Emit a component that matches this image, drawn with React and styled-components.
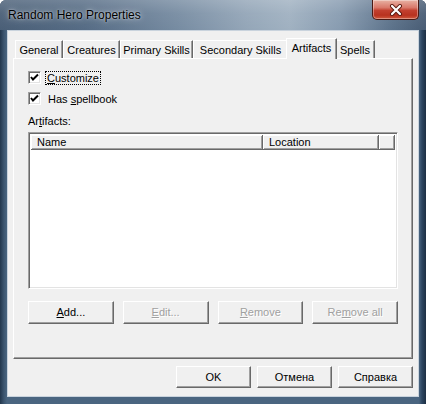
import React from "react";
import styled, { createGlobalStyle, css } from "styled-components";

const Global = createGlobalStyle`
  html, body { margin: 0; padding: 0; background: #ffffff; }
  body { font-family: "Liberation Sans", Arial, sans-serif; }
  * { box-sizing: border-box; }
`;

const Window = styled.div`
  width: 426px;
  height: 404px;
  display: flex;
  flex-direction: column;
  background: linear-gradient(90deg, #22364c 0px, #3d5670 4px, #4a6580 7px, #4a6580 calc(100% - 7px), #2c4560 calc(100% - 4px), #1d2f44 100%);
  border-radius: 6px 6px 0 0;
  overflow: hidden;
`;

const TitleBar = styled.div`
  height: 30px;
  flex: none;
  display: flex;
  align-items: flex-start;
  justify-content: space-between;
  padding-left: 8px;
  padding-right: 7px;
  background:
    linear-gradient(180deg, rgba(255,255,255,0.18) 0%, rgba(255,255,255,0.05) 45%, rgba(0,0,0,0) 100%),
    linear-gradient(90deg, #4a5f77 0%, #566c85 20%, #778ca2 42%, #94a6b8 58%, #a0b1c1 68%, #879bb0 80%, #5c728a 92%, #485c74 100%);
`;

const Title = styled.div`
  font-family: "Liberation Sans", Arial, sans-serif;
  font-size: 12px;
  color: #000;
  line-height: 16px;
  margin-top: 7px;
  text-shadow: 0 0 6px rgba(255,255,255,0.7), 0 0 2px rgba(255,255,255,0.6);
`;

const CloseButton = styled.div`
  width: 47px;
  height: 20px;
  border: 1px solid #4a1a14;
  border-top: none;
  border-radius: 0 0 5px 5px;
  background: linear-gradient(180deg, #e8b2a4 0%, #d9786a 40%, #c2402f 55%, #b8321f 80%, #cf5a3e 100%);
  box-shadow: inset 0 0 0 1px rgba(255,255,255,0.35);
  display: flex;
  align-items: center;
  justify-content: center;
`;

const Frame = styled.div`
  flex: 1;
  display: flex;
  flex-direction: column;
  padding: 0 7px 7px 7px;
`;

const Client = styled.div`
  flex: 1;
  background: #f0f0f0;
  border: 1px solid #c9d3dd;
  display: flex;
  flex-direction: column;
  padding: 7px 5px 0 5px;
  font-family: "Liberation Sans", Arial, sans-serif;
  font-size: 11px;
  color: #000;
`;

const TabRow = styled.div`
  height: 20px;
  flex: none;
  display: flex;
  align-items: flex-end;
  padding-left: 2px;
  position: relative;
  z-index: 1;
`;

const Tab = styled.div`
  width: ${(p) => p.$w}px;
  height: 18px;
  display: flex;
  align-items: center;
  justify-content: center;
  background: #f0f0f0;
  border-top: 1px solid #ffffff;
  border-left: 1px solid #ffffff;
  border-right: 1px solid #696969;
  box-shadow: inset -1px 0 #a0a0a0;
  line-height: 13px;
  padding-top: 1px;
  ${(p) =>
    p.$active &&
    css`
      height: 21px;
      margin: 0 -2px -1px -2px;
      width: ${p.$w + 4}px;
      padding-bottom: 3px;
      position: relative;
    `}
`;

const Panel = styled.div`
  height: 301px;
  flex: none;
  border: 1px solid;
  border-color: #ffffff #696969 #696969 #ffffff;
  box-shadow: inset -1px -1px #a0a0a0;
  display: flex;
  flex-direction: column;
  padding: 12px 14px 0 14px;
`;

const CheckRow = styled.div`
  display: flex;
  align-items: center;
  height: 13px;
  margin-top: ${(p) => p.$mt || 0}px;
`;

const Box = styled.div`
  width: 13px;
  height: 13px;
  background: #fff;
  border: 1px solid;
  border-color: #a0a0a0 #ffffff #ffffff #a0a0a0;
  box-shadow: inset 1px 1px #696969, inset -1px -1px #e3e3e3;
  display: flex;
  align-items: center;
  justify-content: center;
  flex: none;
`;

const CheckLabel = styled.span`
  margin-left: ${(p) => (p.$focus ? 4 : 5)}px;
  padding: 0 1px;
  line-height: 12px;
  border: 1px dotted ${(p) => (p.$focus ? "#000" : "transparent")};
`;

const FieldLabel = styled.div`
  margin-top: 10px;
  line-height: 13px;
`;

const ListView = styled.div`
  margin-top: 4px;
  height: 157px;
  background: #fff;
  border: 1px solid;
  border-color: #a0a0a0 #ffffff #ffffff #a0a0a0;
  box-shadow: inset 1px 1px #696969, inset -1px -1px #e3e3e3;
  padding: 2px 2px 0 2px;
`;

const Header = styled.div`
  display: flex;
  height: 15px;
`;

const HeadCell = styled.div`
  width: ${(p) => (p.$w ? `${p.$w}px` : "auto")};
  flex: ${(p) => (p.$w ? "none" : 1)};
  background: #f0f0f0;
  border-right: 1px solid #696969;
  border-bottom: 1px solid #696969;
  box-shadow: inset 1px 1px #ffffff, inset -1px -1px #a0a0a0;
  padding-left: 6px;
  line-height: 14px;
`;

const ButtonRow = styled.div`
  margin-top: 12px;
  display: grid;
  grid-template-columns: repeat(4, 1fr);
  column-gap: 9px;
`;

const Button = styled.div`
  height: ${(p) => p.$h || 23}px;
  width: ${(p) => (p.$w ? `${p.$w}px` : "auto")};
  background: #f0f0f0;
  border: 1px solid;
  border-color: #ffffff #696969 #696969 #ffffff;
  box-shadow: inset -1px -1px #a0a0a0;
  display: flex;
  align-items: center;
  justify-content: center;
  line-height: 13px;
  color: ${(p) => (p.$disabled ? "#a0a0a0" : "#000")};
  text-shadow: ${(p) => (p.$disabled ? "1px 1px #ffffff" : "none")};
`;

const Footer = styled.div`
  margin-top: 7px;
  display: flex;
  justify-content: flex-end;
  gap: 6px;
`;

const U = styled.span`
  text-decoration: underline;
  text-underline-offset: 1px;
`;

const Check = () => (
  <svg width="9" height="9" viewBox="0 0 9 9">
    <polyline points="1,4 3,6.5 8,1.5" fill="none" stroke="#000" strokeWidth="2" />
  </svg>
);

const tabs = [
  ["General", 48],
  ["Creatures", 57],
  ["Primary Skills", 73],
  ["Secondary Skills", 95],
  ["Artifacts", 47],
  ["Spells", 40],
];

export default function App() {
  return (
    <>
      <Global />
      <Window>
        <TitleBar>
          <Title>Random Hero Properties</Title>
          <CloseButton>
            <svg width="14" height="12" viewBox="0 0 14 12">
              <path d="M3 2 L11 10 M11 2 L3 10" stroke="#5a1a10" strokeWidth="4" strokeLinecap="round" />
              <path d="M3 2 L11 10 M11 2 L3 10" stroke="#ffffff" strokeWidth="2.2" strokeLinecap="round" />
            </svg>
          </CloseButton>
        </TitleBar>
        <Frame>
          <Client>
            <TabRow>
              {tabs.map(([t, w]) => (
                <Tab key={t} $w={w} $active={t === "Artifacts"}>
                  {t}
                </Tab>
              ))}
            </TabRow>
            <Panel>
              <CheckRow>
                <Box>
                  <Check />
                </Box>
                <CheckLabel $focus>
                  <U>C</U>ustomize
                </CheckLabel>
              </CheckRow>
              <CheckRow $mt={8}>
                <Box>
                  <Check />
                </Box>
                <CheckLabel>
                  Has <U>s</U>pellbook
                </CheckLabel>
              </CheckRow>
              <FieldLabel>
                Ar<U>t</U>ifacts:
              </FieldLabel>
              <ListView>
                <Header>
                  <HeadCell $w={232}>Name</HeadCell>
                  <HeadCell $w={116}>Location</HeadCell>
                  <HeadCell />
                </Header>
              </ListView>
              <ButtonRow>
                <Button>
                  <span>
                    <U>A</U>dd...
                  </span>
                </Button>
                <Button $disabled>
                  <span>
                    <U>E</U>dit...
                  </span>
                </Button>
                <Button $disabled>
                  <span>
                    <U>R</U>emove
                  </span>
                </Button>
                <Button $disabled>
                  <span>
                    Re<U>m</U>ove all
                  </span>
                </Button>
              </ButtonRow>
            </Panel>
            <Footer>
              <Button $w={75} $h={22}>OK</Button>
              <Button $w={75} $h={22}>Отмена</Button>
              <Button $w={75} $h={22}>Справка</Button>
            </Footer>
          </Client>
        </Frame>
      </Window>
    </>
  );
}
